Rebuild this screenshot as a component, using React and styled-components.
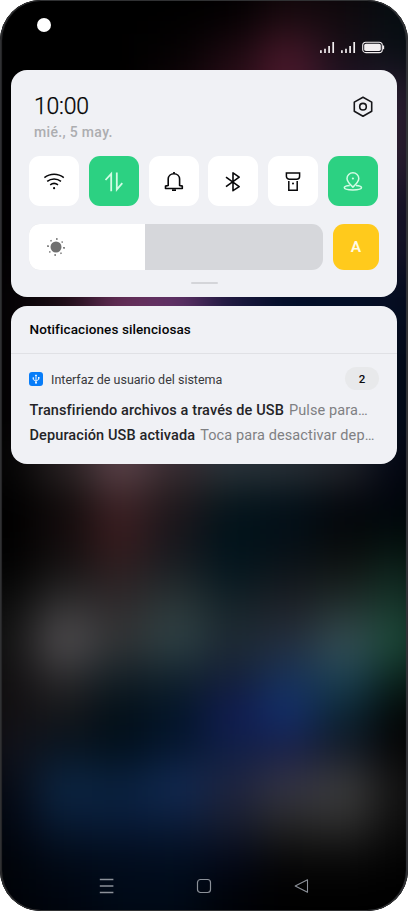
import styled, { createGlobalStyle } from "styled-components";

const GlobalStyle = createGlobalStyle`
  * {
    box-sizing: border-box;
  }
  body {
    margin: 0;
    background: #ffffff;
    font-family: Roboto, sans-serif;
  }
  svg {
    display: block;
    fill: none;
    stroke: currentColor;
  }
`;

const Phone = styled.div`
  position: relative;
  isolation: isolate;
  width: 408px;
  height: 911px;
  display: flex;
  flex-direction: column;
  overflow: hidden;
  border-radius: 41px;
  background: #000000;
`;

const Wallpaper = styled.div`
  position: absolute;
  z-index: -1;
  inset: -20px -20px -21px;
  display: grid;
  grid-template-columns: repeat(8, 56px);
  grid-template-rows: 55px 40px 110px 85px 70px 110px 30px repeat(11, 36px) 56px;
  filter: blur(21px);
`;

const Patch = styled.div`
  background: ${(props) => props.$color};
`;

const Frame = styled.div`
  position: absolute;
  inset: 0;
  border-radius: 41px;
  box-shadow: inset 0 0 0 1px #303133, inset 2px 0 1px #29292b,
    inset -2px 0 1px #35363b;
  pointer-events: none;
`;

const Camera = styled.div`
  position: absolute;
  left: 37px;
  top: 18px;
  width: 14px;
  height: 14px;
  border-radius: 50%;
  background: #ffffff;
`;

const StatusBar = styled.div`
  height: 70px;
  padding: 41px 23px 0 0;
  display: flex;
  justify-content: flex-end;
  align-items: flex-start;
  gap: 6px;
  color: #f2eef0;
`;

const Card = styled.section`
  width: 386px;
  margin: 0 0 ${(props) => props.$gap || 0}px 11px;
  flex: none;
  border-radius: 16px;
  background: #f0f1f5;
`;

const QuickCard = styled(Card)`
  height: 227px;
  padding: 24px 18px 0;
`;

const Header = styled.header`
  height: 62px;
  padding: 0 5px;
  display: flex;
  justify-content: space-between;
`;

const Time = styled.div`
  font-size: 23px;
  line-height: 25px;
  font-weight: 300;
  letter-spacing: -0.2px;
  color: #000000;
  -webkit-text-stroke: 0.25px #000000;
`;

const DateText = styled.div`
  margin-top: 4px;
  font-size: 14px;
  line-height: 18px;
  font-weight: 500;
  letter-spacing: 0.33px;
  color: #acadb0;
`;

const SettingsButton = styled.div`
  padding-top: 1px;
  color: #17171a;
`;

const Tiles = styled.div`
  display: grid;
  grid-template-columns: repeat(6, 50px);
  justify-content: space-between;
  margin-right: 1px;
`;

const Tile = styled.div`
  height: 50px;
  padding-top: 1px;
  display: flex;
  align-items: center;
  justify-content: center;
  border-radius: 11px;
  color: ${(props) => (props.$active ? "#d2fbe4" : "#08080a")};
  background: ${(props) => (props.$active ? "#2cd182" : "#ffffff")};
`;

const BrightnessRow = styled.div`
  display: flex;
  justify-content: space-between;
  margin-top: 18px;
`;

const Slider = styled.div`
  width: 294px;
  height: 46px;
  overflow: hidden;
  border-radius: 11px;
  background: #d6d7db;
`;

const SliderFill = styled.div`
  height: 100%;
  padding-left: 16.5px;
  display: flex;
  align-items: center;
  background: #ffffff;
  color: #707070;
`;

const AutoButton = styled.div`
  width: 46px;
  height: 46px;
  border-radius: 11px;
  background: #ffca1c;
  color: #fffbe8;
  font-size: 15.5px;
  font-weight: 600;
  line-height: 47px;
  text-align: center;
`;

const Handle = styled.div`
  width: 27px;
  height: 2px;
  margin: 12px auto 0;
  border-radius: 1px;
  background: #d4d5d9;
`;

const NotificationCard = styled(Card)`
  height: 158px;
`;

const SectionTitle = styled.div`
  height: 48px;
  padding: 0 18.5px;
  border-bottom: 1px solid #e0e1e5;
  font-size: 13.5px;
  font-weight: 500;
  line-height: 47px;
  letter-spacing: 0.1px;
  color: #050506;
`;

const AppRow = styled.div`
  display: flex;
  align-items: center;
  height: 23px;
  margin: 13px 18px 9px;
`;

const AppIcon = styled.div`
  width: 14px;
  height: 14px;
  border-radius: 3px;
  background: #087df8;
  color: #ffffff;
`;

const AppName = styled.div`
  margin-left: 8px;
  padding-top: 1px;
  font-size: 12.5px;
  color: #39393c;
`;

const Count = styled.div`
  width: 34px;
  height: 23px;
  margin-left: auto;
  border-radius: 12px;
  background: #e8e9eb;
  color: #0c0c0e;
  font-size: 11.5px;
  font-weight: 500;
  line-height: 24px;
  text-align: center;
`;

const Message = styled.div`
  display: flex;
  align-items: baseline;
  gap: 5px;
  height: 24.5px;
  padding-left: 18.5px;
  font-size: 14.5px;
  line-height: 24px;
  letter-spacing: 0.11px;
  white-space: nowrap;
  color: #7f8083;
`;

const MessageTitle = styled.span`
  font-weight: 500;
  color: #242427;
`;

const NavBar = styled.nav`
  margin-top: auto;
  height: 50px;
  padding: 17px 99px 0;
  display: flex;
  justify-content: space-between;
  color: #8c9199;
`;

const SignalIcon = () => (
  <svg width="15" height="13" viewBox="0 0 15 13" strokeWidth="1.7">
    <path d="M.9 9.2v2.9M5 7.7v4.4M9.1 5v7.1M13.2 1v11.1" />
  </svg>
);

const BatteryIcon = () => (
  <svg width="23" height="13" viewBox="0 0 23 13">
    <rect x=".7" y="1.2" width="19.6" height="10.4" rx="3.2" strokeWidth="1.1" />
    <rect x="2.2" y="2.7" width="16.6" height="7.4" rx="1.8" fill="currentColor" stroke="none" />
    <path d="M21.4 4.6v3.6" strokeWidth="1.5" />
  </svg>
);

const SettingsIcon = () => (
  <svg width="22" height="24" viewBox="0 0 22 24" strokeWidth="1.6" strokeLinejoin="round">
    <path d="M11 2.3l8.7 4.8v9.2L11 21.2l-8.7-4.9V7.1z" />
    <circle cx="11" cy="11.7" r="3.3" />
  </svg>
);

const WifiIcon = () => (
  <svg width="24" height="24" viewBox="0 0 24 24" strokeWidth="1.5">
    <path d="M2.4 7.6C8.1 3 16.1 3 21.8 7.6M5.2 11.3c4-3.2 9.8-3.2 13.8 0M8.2 14.8c2.3-1.7 5.5-1.7 7.8 0" />
    <circle cx="12.1" cy="18.2" r="1.1" fill="currentColor" stroke="none" />
  </svg>
);

const DataIcon = () => (
  <svg width="24" height="24" viewBox="0 0 24 24" strokeWidth="1.8">
    <path d="M3.5 10l5.7-6.1v17.4M14.8 2.6v17l5.5-6.4" />
  </svg>
);

const BellIcon = () => (
  <svg width="24" height="24" viewBox="0 0 24 24" strokeWidth="1.6" strokeLinejoin="round">
    <path d="M6.2 15.5V9.1c0-3.1 2.5-5.4 5.7-5.4s5.7 2.3 5.7 5.4v6.4l2.7.6v2.4H3.5v-2.4z" />
    <path d="M12 2v1.6M10 20.2h4" strokeWidth="1.8" />
  </svg>
);

const BluetoothIcon = () => (
  <svg width="24" height="24" viewBox="0 0 24 24" strokeWidth="1.6" strokeLinejoin="round">
    <path d="M5 7.1l13.2 9.5-6.2 4.1V2.9l6.2 4.2L5 16.7" />
  </svg>
);

const TorchIcon = () => (
  <svg width="24" height="24" viewBox="0 0 24 24" strokeWidth="1.5">
    <path d="M5.4 3.1h13.2v3.1c0 1.9-1.4 3-3 3H8.4c-1.6 0-3-1.1-3-3zM7.8 10.9v9.3h8.4v-9.3" />
    <circle cx="12" cy="13.4" r="1" fill="currentColor" stroke="none" />
  </svg>
);

const LocationIcon = () => (
  <svg width="24" height="24" viewBox="0 0 24 24" strokeWidth="1.5" strokeLinejoin="round">
    <path d="M11.9 17.1C8.4 13.8 6 11.4 6 8.4a5.9 5.6 0 0 1 11.8 0c0 3-2.4 5.4-5.9 8.7z" />
    <path d="M8.8 15.4c-3.3.2-5.5 1.1-5.5 2.2 0 1.4 3.7 2.4 8.6 2.4s8.6-1 8.6-2.4c0-1.1-2.2-2-5.5-2.2" />
    <circle cx="11.9" cy="8.5" r="1.1" fill="currentColor" stroke="none" />
  </svg>
);

const SunIcon = () => (
  <svg width="20" height="20" viewBox="0 0 20 20" strokeWidth="1.5">
    <circle cx="10" cy="10" r="5.5" fill="currentColor" stroke="none" />
    <g transform="rotate(6 10 10)">
      <path d="M10 1v1.9M10 17.1V19M1 10h1.9M17.1 10H19M3.9 3.9l1 1M15.1 15.1l1 1M3.9 16.1l1-1M15.1 4.9l1-1" />
    </g>
  </svg>
);

const UsbIcon = () => (
  <svg width="14" height="14" viewBox="0 0 14 14" strokeWidth=".9">
    <path d="M7 3.5v7M4.3 6.1v1.5L7 9.2M9.7 5.8v1.7L7 9" />
    <path d="M7 2.3l1.2 1.8H5.8z" fill="currentColor" stroke="none" />
    <circle cx="7" cy="10.7" r="1" fill="currentColor" stroke="none" />
    <circle cx="4.3" cy="6" r=".8" fill="currentColor" stroke="none" />
    <path d="M9 5h1.5v1.5H9z" fill="currentColor" stroke="none" />
  </svg>
);

// home screen colours behind the shade, one line per row
const wallpaper = [
  "#000000 #000000 #000000 #000000 #020001 #16090d #10090d #060e13",
  "#000000 #000000 #000000 #050203 #1c0910 #4a182b #180f18 #0a1016",
  "#000000 #000000 #000000 #120509 #2c0e1a #4a182b #241428 #2a1e32",
  "#000000 #0a0408 #200f18 #200f20 #140e20 #140e20 #10102a #17142a",
  "#030103 #1c0c15 #682f5a #65346c #1c1840 #000d28 #020e26 #050d22",
  "#020102 #1c1216 #503642 #382a38 #202c3a #18202e #101624 #020a1a",
  "#060606 #302a2b #644c52 #3c3034 #343c41 #343a3e #2c2e32 #030612",
  "#000000 #110c0c #3d2428 #221a1d #08161c #03111a #05080f #01050e",
  "#000000 #130b0c #391b1d #17141a #00121a #030e16 #040709 #010b0a",
  "#020202 #151313 #2c1e20 #1a2024 #04161e #0d1419 #111514 #0d241c",
  "#0e0e0e #333233 #2f2c2e #2c3839 #16242a #1e2127 #22302f #17382c",
  "#141414 #535053 #333536 #2f4347 #1e2a33 #242f3e #374f54 #1c4c3a",
  "#121012 #2a292b #131f26 #11202b #131f38 #17325a #1c4254 #0a241c",
  "#131012 #141518 #020e16 #021428 #101b52 #122e6c #0a2432 #020706",
  "#11121b #081522 #02111e #061730 #0f1f45 #191f46 #141a28 #060606",
  "#070b14 #0d2745 #0a2240 #122b55 #1f2440 #363646 #3e3e3e #141414",
  "#020712 #081a33 #081b38 #0b1c3a #181e30 #282828 #2e2e2e #0e0e0e",
  "#01040a #020b18 #020c1c #020e20 #04091a #080808 #0a0a0a #040404",
  "#000308 #00050f #000a18 #000a18 #000208 #000000 #000000 #000000",
]
  .join(" ")
  .split(" ");

const tiles = [
  { name: "wifi", icon: <WifiIcon /> },
  { name: "data", icon: <DataIcon />, active: true },
  { name: "sound", icon: <BellIcon /> },
  { name: "bluetooth", icon: <BluetoothIcon /> },
  { name: "torch", icon: <TorchIcon /> },
  { name: "location", icon: <LocationIcon />, active: true },
];

const messages = [
  { title: "Transfiriendo archivos a través de USB", text: "Pulse para…" },
  { title: "Depuración USB activada", text: "Toca para desactivar dep…" },
];

const brightness = 39.4;

const App = () => {
  return (
    <>
      <GlobalStyle />
      <Phone>
        <Wallpaper>
          {wallpaper.map((color, i) => (
            <Patch key={i} $color={color} />
          ))}
        </Wallpaper>
        <Camera />
        <StatusBar>
          <SignalIcon />
          <SignalIcon />
          <BatteryIcon />
        </StatusBar>
        <QuickCard $gap={9}>
          <Header>
            <div>
              <Time>10:00</Time>
              <DateText>mié., 5 may.</DateText>
            </div>
            <SettingsButton>
              <SettingsIcon />
            </SettingsButton>
          </Header>
          <Tiles>
            {tiles.map((tile) => (
              <Tile key={tile.name} $active={tile.active}>
                {tile.icon}
              </Tile>
            ))}
          </Tiles>
          <BrightnessRow>
            <Slider>
              <SliderFill style={{ width: `${brightness}%` }}>
                <SunIcon />
              </SliderFill>
            </Slider>
            <AutoButton>A</AutoButton>
          </BrightnessRow>
          <Handle />
        </QuickCard>
        <NotificationCard>
          <SectionTitle>Notificaciones silenciosas</SectionTitle>
          <AppRow>
            <AppIcon>
              <UsbIcon />
            </AppIcon>
            <AppName>Interfaz de usuario del sistema</AppName>
            <Count>2</Count>
          </AppRow>
          {messages.map((message) => (
            <Message key={message.title}>
              <MessageTitle>{message.title}</MessageTitle>
              <span>{message.text}</span>
            </Message>
          ))}
        </NotificationCard>
        <NavBar>
          <svg width="16" height="16" viewBox="0 0 16 16" strokeWidth="1.3">
            <path d="M.8 1.5h13.6M.8 8h13.6M.8 14.5h13.6" />
          </svg>
          <svg width="16" height="16" viewBox="0 0 16 16" strokeWidth="1.2">
            <rect x="1.5" y="1.5" width="13" height="13" rx="3" />
          </svg>
          <svg width="16" height="16" viewBox="0 0 16 16" strokeWidth="1.1" strokeLinejoin="round">
            <path d="M2.2 8l12.3-6.3v12.6z" />
          </svg>
        </NavBar>
        <Frame />
      </Phone>
    </>
  );
};

export default App;
